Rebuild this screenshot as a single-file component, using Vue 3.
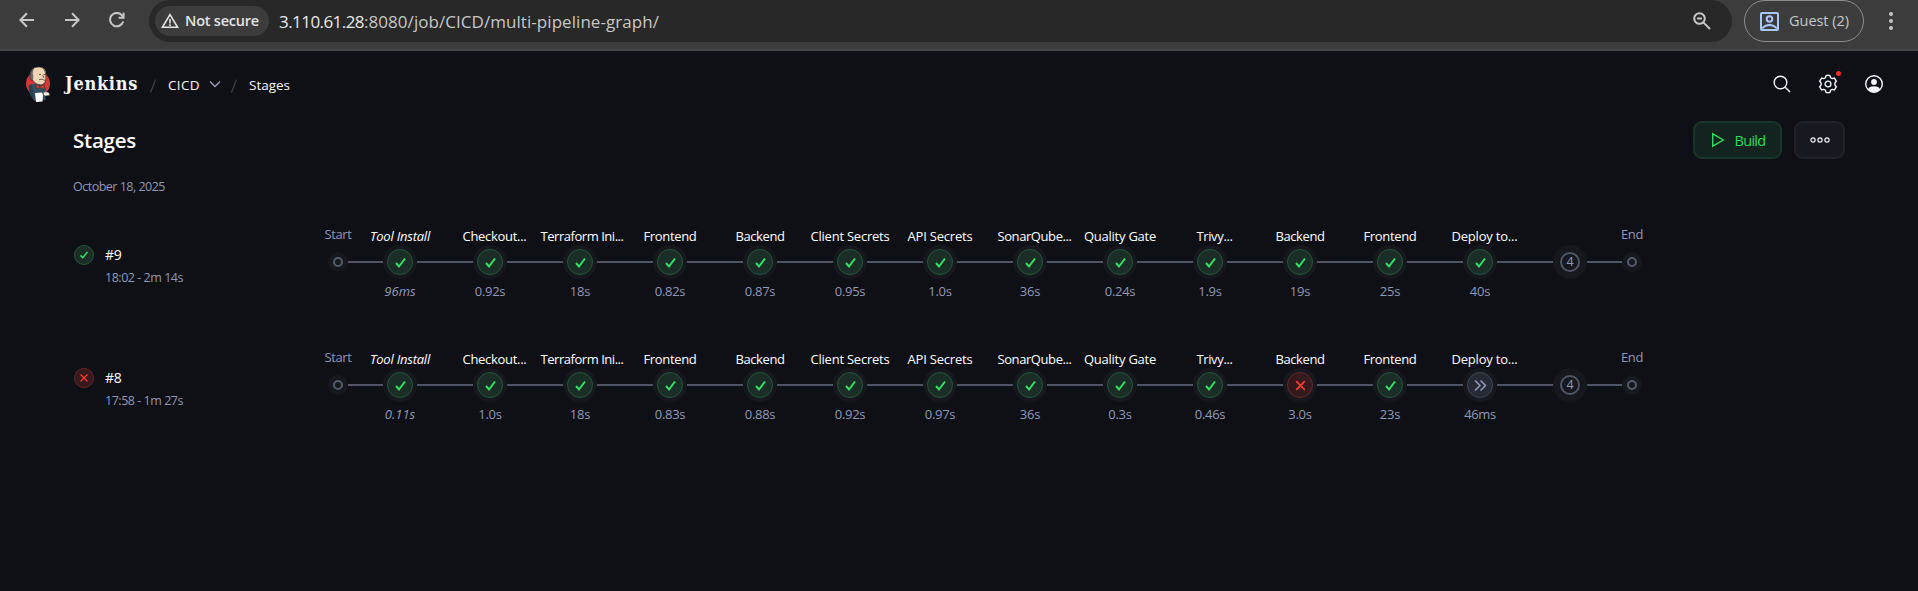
<script setup>
const stageDefs = [
  ['Tool Install', 60, 0],
  ['Checkout...', 64, 4.5],
  ['Terraform Ini...', 83, 2],
  ['Frontend', 53, 0],
  ['Backend', 49, 0],
  ['Client Secrets', 79, 0],
  ['API Secrets', 65, 0],
  ['SonarQube...', 74, 4.5],
  ['Quality Gate', 72, 0],
  ['Trivy...', 36, 4.5],
  ['Backend', 49, 0],
  ['Frontend', 53, 0],
  ['Deploy to...', 66, 4.5],
]
const timeWidth = (t) => {
  let w = 1
  for (const c of t) w += c === '.' ? 2.8 : c === 's' ? 5.5 : c === 'm' ? 11.2 : 7
  return w
}
const build = (id, time, timeW, state, times, states = {}) => ({
  id, time, timeW, state,
  stages: stageDefs.map(([name, width, shift], i) => ({
    name, width, shift, time: times[i], state: states[i] || 'ok', skeleton: i === 0,
  })),
})
const builds = [
  build('#9', '18:02 - 2m 14s', 78, 'ok',
    ['96ms', '0.92s', '18s', '0.82s', '0.87s', '0.95s', '1.0s', '36s', '0.24s', '1.9s', '19s', '25s', '40s']),
  build('#8', '17:58 - 1m 27s', 78, 'bad',
    ['0.11s', '1.0s', '18s', '0.83s', '0.88s', '0.92s', '0.97s', '36s', '0.3s', '0.46s', '3.0s', '23s', '46ms'],
    { 10: 'bad', 12: 'skip' }),
]
// Spreads the letters so that a label takes the given width.
const vFit = {
  mounted(el, { value }) {
    const w = el.getBoundingClientRect().width
    el.style.letterSpacing = (value - w) / el.textContent.length + 'px'
  },
}
</script>

<template>
  <div class="page">
    <div class="browser">
      <svg class="nav" width="16" height="16" viewBox="0 0 16 16"><path d="M15 8H1.5M8 1.3 1.3 8 8 14.7" /></svg>
      <svg class="nav" width="16" height="16" viewBox="0 0 16 16"><path d="M1 8h13.5M8 1.3 14.7 8 8 14.7" /></svg>
      <svg class="nav" width="16" height="16" viewBox="0 0 16 16"><path d="M14.2 9.5A6.7 6.7 0 1 1 12.9 3.3L14.5 5M14.6 .8V5.7H9.6" /></svg>
      <div class="address">
        <div class="chip">
          <svg width="18" height="16" viewBox="0 0 18 16"><path d="M9 1.6 16.6 14.3H1.4ZM9 6v4.4M9 11.3v1.6" /></svg>
          <span v-fit="74">Not secure</span>
        </div>
        <span class="url"><span v-fit="85" class="host">3.110.61.28</span><span v-fit="295">:8080/job/CICD/multi-pipeline-graph/</span></span>
        <svg class="lens" width="18" height="18" viewBox="0 0 18 18"><circle cx="6.5" cy="6.5" r="5.3" /><path d="M4 6.5h5M10.6 10.6 17 17" /></svg>
      </div>
      <div class="guest">
        <svg width="19" height="19" viewBox="0 0 19 19"><rect x="1" y="1" width="17" height="17" rx="1" /><circle cx="9.5" cy="7" r="2.8" /><path d="M2 16.2Q9.500 9.600 17 16.200" /></svg>
        <span v-fit="60">Guest (2)</span>
      </div>
      <div class="kebab"><i></i><i></i><i></i></div>
    </div>

    <header class="header">
      <svg class="logo" width="26" height="36" viewBox="0 0 26 36">
        <ellipse cx="13" cy="17.500" rx="12" ry="12.500" fill="#d33833" stroke="none" />
        <path d="M4 19 10 17.500 17 19 21 22 20.500 34 9 34.500 4.500 27Z" fill="#335061" stroke="none" />
        <path d="M5 10Q5 1 13.500 1T20.800 9.500Q21.500 17 16.500 18.800 11 19 8 14.500Z" fill="#f0d6b7" stroke="none" />
        <path d="M5 13Q3.500 5.500 9 2.500 7 7 8.300 9.500L8 14 6.500 14.500Z" fill="#6d6b6d" stroke="none" />
        <path d="M5 12Q4.500 1 14 .8 20.500 1 20.800 10 21.500 18 16.500 19 11 19 8 14.500L6 14Z" stroke="#302b29" stroke-width=".7" />
        <path d="M14 8.500h2M18.500 8.500h1.500M14 13.700Q17 12.200 20 14.500M17.800 9l1 3" stroke="#6d4b3a" stroke-width=".9" />
        <path d="M11 18.300 15 20.500 19 18.500V23.500L15 21.500 11.500 23Z" fill="#d33833" stroke="#302b29" stroke-width=".4" />
        <path d="M10 27 17 26.500 18 29 17.500 35.500 11 36Z" fill="#fff" stroke="none" />
        <path d="M18 28Q19.500 24.500 22 26 25 26 24.500 29.500L20 30Z" fill="#f4eee8" stroke="#302b29" stroke-width=".5" />
        <path d="M3.500 20 7 18.500 8.500 27 10 33 5.500 29.500Z" fill="#29414f" stroke="none" />
      </svg>
      <span v-fit="73" class="brand">Jenkins</span>
      <svg class="slash" width="8" height="14" viewBox="0 0 8 14"><path d="M6.500.5 1.500 13.500" /></svg>
      <span v-fit="32" class="crumb cicd">CICD</span>
      <svg class="chevron" width="12" height="8" viewBox="0 0 12 8"><path d="M1 1.500 6 6.500 11 1.500" /></svg>
      <svg class="slash second" width="8" height="14" viewBox="0 0 8 14"><path d="M6.500.5 1.500 13.500" /></svg>
      <span v-fit="41" class="crumb">Stages</span>
      <div class="actions">
        <svg width="18" height="18" viewBox="0 0 18 18"><circle cx="7.500" cy="7.500" r="6.300" /><path d="M12.200 12.200 17 17" /></svg>
        <div class="gear">
          <svg width="20" height="20" viewBox="0 0 20 20"><path d="M8.100 1.600Q10 .8 11.900 1.600L12.600 3.800 14.200 4.600 16.400 4.100 18.300 7.200 16.900 9V11L18.300 12.800 16.400 15.900 14.200 15.400 12.600 16.200 11.900 18.400Q10 19.200 8.100 18.400L7.400 16.200 5.800 15.400 3.600 15.900 1.700 12.800 3.100 11V9L1.700 7.200 3.600 4.100 5.800 4.600 7.400 3.800Z" /><circle cx="10" cy="10" r="2.900" /></svg>
          <i class="dot"></i>
        </div>
        <svg width="20" height="20" viewBox="0 0 20 20"><circle cx="10" cy="10" r="8.300" /><circle class="solid" cx="10" cy="8" r="2.900" /><path class="solid" d="M4 15.500Q5 12.300 10 12.300T16 15.500Q10 21 4 15.500Z" /></svg>
      </div>
    </header>

    <div class="title-bar">
      <h1><span v-fit="63">Stages</span></h1>
      <div class="buttons">
        <button class="btn build">
          <svg width="14" height="16" viewBox="0 0 14 16"><path d="M1.700 1.800V14.200L12.300 8Z" /></svg>
          <span v-fit="31">Build</span>
        </button>
        <button class="btn more">
          <svg width="22" height="8" viewBox="0 0 22 8"><circle cx="4" cy="4" r="2.100" /><circle cx="11" cy="4" r="2.100" /><circle cx="18" cy="4" r="2.100" /></svg>
        </button>
      </div>
    </div>

    <div class="date"><span v-fit="92">October 18, 2025</span></div>

    <section v-for="b in builds" :key="b.id" class="run">
      <div class="info">
        <span class="badge" :class="b.state">
          <svg v-if="b.state === 'ok'" width="10" height="10" viewBox="0 0 13 13"><path d="M2 7 5 10 11 2.500" /></svg>
          <svg v-else width="10" height="10" viewBox="0 0 13 13"><path d="M2 2 11 11M11 2 2 11" /></svg>
        </span>
        <div>
          <div class="num"><span v-fit="16.5">{{ b.id }}</span></div>
          <div class="when"><span v-fit="b.timeW">{{ b.time }}</span></div>
        </div>
      </div>
      <div class="graph">
        <div class="cap"><span v-fit="27">Start</span><div class="end"><i></i></div></div>
        <div class="line short"></div>
        <template v-for="(s, i) in b.stages" :key="i">
          <div class="stage" :class="{ skeleton: s.skeleton }">
            <span class="name" :style="{ marginLeft: s.shift * 2 + 'px' }"><span v-fit="s.width">{{ s.name }}</span></span>
            <div class="halo">
              <span class="node" :class="s.state">
                <svg v-if="s.state === 'ok'" width="13" height="13" viewBox="0 0 13 13"><path d="M2 7 5 10.500 11 2.500" /></svg>
                <svg v-else-if="s.state === 'bad'" width="13" height="13" viewBox="0 0 13 13"><path d="M2.200 2.200 10.800 10.800M10.800 2.200 2.200 10.800" /></svg>
                <svg v-else width="14" height="13" viewBox="0 0 14 13"><path d="M2 1.500 7 6.500 2 11.500M7.500 1.500 12.500 6.500 7.500 11.500" /></svg>
              </span>
            </div>
            <span class="time"><span v-fit="timeWidth(s.time)">{{ s.time }}</span></span>
          </div>
          <div class="line"></div>
        </template>
        <div class="stage">
          <span class="name">&nbsp;</span>
          <div class="halo"><span class="counter">4</span></div>
        </div>
        <div class="line short"></div>
        <div class="cap"><span v-fit="22">End</span><div class="end"><i></i></div></div>
      </div>
    </section>
  </div>
</template>

<style>
html, body { background: #0f1015; overflow: hidden; }
</style>

<style scoped>
* { box-sizing: border-box; }
.page { height: 591px; overflow: hidden; background: #0f1015; color: #fff; font: 13px/20px "Open Sans", "Noto Sans", sans-serif; white-space: nowrap; }
svg { display: block; flex: none; fill: none; stroke: currentColor; }
span { flex: none; }
[class] > span:not([class]) { display: inline-block; }

.browser { display: flex; height: 51px; padding-left: 19px; background: #3c3c3c; border-bottom: 2px solid #474747; color: #c7c7c7; }
.nav { margin: 12px 29px 0 0; stroke-width: 2; }
.address { display: flex; align-items: center; width: 1583px; height: 42px; margin-left: -5px; padding: 0 21px 0 6px; border-radius: 21px; background: #282828; flex: none; }
.chip { display: flex; align-items: center; gap: 6px; width: 114px; height: 30px; padding-left: 6px; border-radius: 15px; background: #3c3c3c; color: #e3e3e3; font-size: 14.5px; font-weight: 600; flex: none; }
.chip svg { stroke-width: 1.6; }
.url { display: flex; margin: 1px auto 0 10px; font-size: 17px; color: #c7c7c7; }
.url .host { color: #e8e8e8; }
.lens { stroke-width: 2; }
.guest { display: flex; align-items: center; gap: 10px; width: 120px; height: 42px; margin-left: 12px; padding-left: 15px; border: 1px solid #8c8c8c; border-radius: 21px; font-size: 14.5px; flex: none; }
.guest svg { color: #a8c7fa; stroke-width: 2; }
.kebab { display: flex; flex-direction: column; gap: 3px; margin: 12px 0 0 25px; }
.kebab i { width: 4px; height: 4px; border-radius: 50%; background: #c7c7c7; }

.header { display: flex; align-items: center; height: 66px; padding: 0 34px 0 25px; }
.brand { margin-left: 14px; font: bold 18px/20px "DejaVu Serif Condensed", "DejaVu Serif", serif; font-stretch: condensed; color: #f3f6ff; }
.slash { margin-left: 11px; color: #3b3e49; stroke-width: 1.3; margin-top: 3px; }
.crumb { font-size: 13.5px; margin-top: 2px; margin-left: 11px; color: #f7f7fb; }
.cicd { margin-left: 11px; }
.chevron { margin: 0 0 0 9px; color: #9a9fbb; stroke-width: 1.4; }
.slash.second { margin-left: 9px; }
.actions { display: flex; align-items: center; gap: 26px; margin-left: auto; color: #f2f5ff; }
.actions svg { stroke-width: 1.4; }
.actions > svg:first-child { margin-right: 1px; }
.actions .solid { fill: currentColor; stroke: none; }
.gear { position: relative; }
.dot { position: absolute; right: -3px; top: -3px; width: 5px; height: 5px; border-radius: 50%; background: #f52b24; }

.title-bar { display: flex; justify-content: space-between; height: 50px; padding: 4px 73px 0; }
h1 { margin: 6px 0 0; font-size: 20.5px; line-height: 26px; font-weight: 600; }
h1 span { display: inline-block; }
.buttons { display: flex; gap: 12px; }
.btn { display: flex; align-items: center; justify-content: center; height: 38px; padding: 0; border: 2px solid #202227; border-radius: 9px; background: #171920; color: #f2f5ff; font: 14.5px/20px "Open Sans", "Noto Sans", sans-serif; }
.btn.build { width: 89px; gap: 10px; padding-left: 1px; background: #13231f; border-color: #183627; color: #2fdc5a; }
.btn.build svg { stroke-width: 1.4; }
.btn.build span { margin-top: 2px; }
.btn.more { width: 51px; }
.btn.more svg { stroke-width: 1.2; }

.date { height: 59px; padding: 10px 73px 0; font-size: 12.5px; color: #8f98b7; }
.run { display: flex; height: 123px; padding-left: 74px; }
.info { display: flex; gap: 11px; width: 254px; padding-top: 19px; flex: none; }
.num { font-size: 14px; }
.when { margin-top: 3px; font-size: 12.5px; color: #8f98b7; }
.badge { display: flex; align-items: center; justify-content: center; width: 20px; height: 20px; border: 1px solid; border-radius: 50%; }
.badge svg { stroke-width: 2; }
.node { display: flex; align-items: center; justify-content: center; width: 26px; height: 26px; border: 1.5px solid; border-radius: 50%; }
.node svg { stroke-width: 2; }
.ok { background: #1b2d27; border-color: #22583a; }
.ok svg { color: #35e062; }
.bad { background: #34191d; border-color: #6b2526; }
.bad svg { color: #fb3b2e; stroke-width: 1.7; }
.skip { background: #262a34; border-color: #424754; }
.skip svg { color: #8f98b7; stroke-width: 1.6; }
.graph { display: flex; align-items: flex-start; }
.line { width: 56px; height: 2px; margin-top: 35px; background: #505565; flex: none; }
.line.short { width: 35px; }
.stage, .cap { display: flex; flex-direction: column; align-items: center; flex: none; }
.stage { width: 34px; }
.cap { width: 20px; margin-top: -2px; gap: 8px; font-size: 13px; color: #8f98b7; }
.name { margin-bottom: -1px; font-size: 13px; }
.time { margin-top: 2px; font-size: 13px; color: #8f98b7; }
.skeleton .name, .skeleton .time { font-style: italic; }
.halo { display: flex; align-items: center; justify-content: center; width: 34px; height: 34px; border-radius: 50%; background: #16181e; flex: none; }
.end { display: flex; align-items: center; justify-content: center; width: 20px; height: 20px; border-radius: 50%; background: #16181e; }
.end i { width: 10px; height: 10px; border: 2px solid #565b6b; border-radius: 50%; }
.counter { display: flex; align-items: center; justify-content: center; width: 20px; height: 20px; border: 2px solid #505565; border-radius: 50%; font-size: 12.5px; color: #8f98b7; }
</style>
